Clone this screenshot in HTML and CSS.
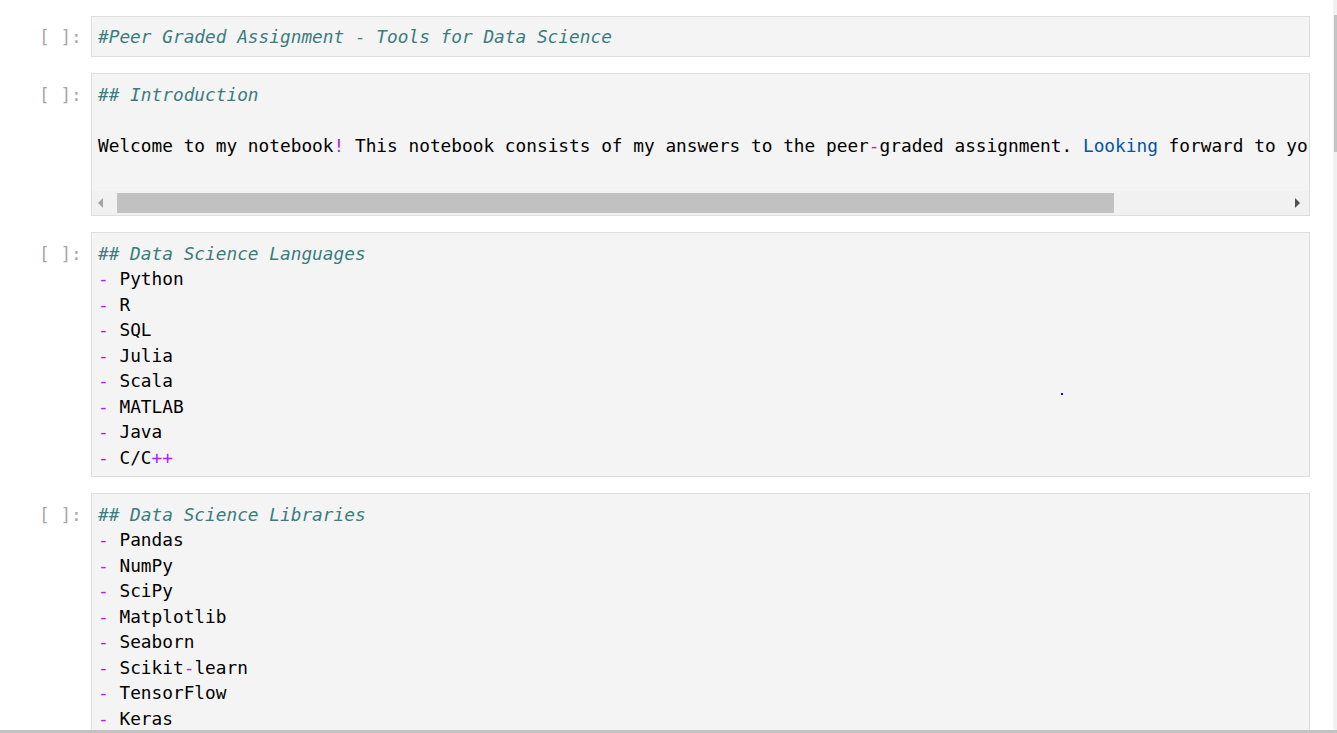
FILE: index.html
```html
<!DOCTYPE html>
<html lang="en">
<head>
<meta charset="utf-8">
<title>Notebook</title>
<link rel="stylesheet" href="styles.css">
</head>
<body>
<div class="page">
  <main class="notebook">
    <div class="cell first">
      <div class="prompt">[ ]:</div>
      <div class="input">
        <div class="code"><div class="line"><span class="hd">#Peer Graded Assignment - Tools for Data Science</span></div></div>
      </div>
    </div>

    <div class="cell">
      <div class="prompt">[ ]:</div>
      <div class="input">
        <div class="code clip"><div class="line"><span class="hd">## Introduction</span></div><div class="line"> </div><div class="line">Welcome to my notebook<span class="pu">!</span> This notebook consists of my answers to the peer<span class="pu">-</span>graded assignment. <span class="bl">Looking</span> forward to your feedback<span class="pu">!</span></div><div class="line"> </div></div>
        <div class="hscroll">
          <div class="arrow left"></div>
          <div class="track"><div class="thumb"></div></div>
          <div class="arrow right"></div>
        </div>
      </div>
    </div>

    <div class="cell">
      <div class="prompt">[ ]:</div>
      <div class="input marked">
        <div class="code"><div class="line"><span class="hd">## Data Science Languages</span></div><div class="line"><span class="pu">-</span> Python</div><div class="line"><span class="pu">-</span> R</div><div class="line"><span class="pu">-</span> SQL</div><div class="line"><span class="pu">-</span> Julia</div><div class="line"><span class="pu">-</span> Scala</div><div class="line"><span class="pu">-</span> MATLAB</div><div class="line"><span class="pu">-</span> Java</div><div class="line"><span class="pu">-</span> C/C<span class="pu">++</span></div></div>
        <span class="dot"></span>
      </div>
    </div>

    <div class="cell">
      <div class="prompt">[ ]:</div>
      <div class="input">
        <div class="code"><div class="line"><span class="hd">## Data Science Libraries</span></div><div class="line"><span class="pu">-</span> Pandas</div><div class="line"><span class="pu">-</span> NumPy</div><div class="line"><span class="pu">-</span> SciPy</div><div class="line"><span class="pu">-</span> Matplotlib</div><div class="line"><span class="pu">-</span> Seaborn</div><div class="line"><span class="pu">-</span> Scikit<span class="pu">-</span>learn</div><div class="line"><span class="pu">-</span> TensorFlow</div><div class="line"><span class="pu">-</span> Keras</div><div class="line"><span class="pu">-</span> PyTorch</div></div>
      </div>
    </div>
  </main>
  <div class="vscroll"><div class="vthumb"></div></div>
</div>
<div class="bottombar"></div>
</body>
</html>
```

FILE: styles.css
```css
* { box-sizing: border-box; }

html, body {
  margin: 0;
  padding: 0;
  height: 733px;
  overflow: hidden;
  background: #ffffff;
}

body {
  display: flex;
  flex-direction: column;
  font-family: "DejaVu Sans Mono", "Liberation Mono", monospace;
  font-size: 17.8px;
  color: #000000;
}

.page {
  flex: 1;
  min-height: 0;
  display: flex;
  overflow: hidden;
}

.notebook {
  flex: 1;
  min-width: 0;
  padding: 16px 23px 0 0;
  display: flex;
  flex-direction: column;
  gap: 16px;
}

.cell {
  display: flex;
  flex-shrink: 0;
}

.prompt {
  width: 91px;
  flex-shrink: 0;
  padding: 8.5px 0 0 39px;
  line-height: 25.5px;
  color: #a8a8a8;
  white-space: pre;
}

.input {
  position: relative;
  flex: 1;
  min-width: 0;
  background: #f4f4f4;
  border: 1px solid #dedede;
  display: flex;
  flex-direction: column;
}

.code {
  padding: 7.5px 0 6px 6px;
  line-height: 25.5px;
  white-space: pre;
  overflow: hidden;
}

.cell.first .code {
  padding: 7px 0 6.5px 6px;
}

.cell.first .prompt {
  padding-top: 8px;
}

.code.clip {
  padding-bottom: 7.5px;
}

.line {
  height: 25.5px;
}

.hd {
  color: #3a7d7c;
  font-style: italic;
}

.pu { color: #aa22ff; }
.bl { color: #0055aa; }

.hscroll {
  height: 24px;
  display: flex;
  align-items: center;
  background: #f1f1f1;
}

.track {
  flex: 1;
  height: 20px;
  display: flex;
}

.thumb {
  width: 997px;
  height: 20px;
  background: #c1c1c1;
}

.arrow {
  width: 25px;
  height: 24px;
  display: flex;
  align-items: center;
  justify-content: center;
}

.arrow::before {
  content: "";
  width: 0;
  height: 0;
  border-top: 5px solid transparent;
  border-bottom: 5px solid transparent;
}

.arrow.left::before {
  border-right: 5px solid #a3a3a3;
  margin-right: 8px;
}

.arrow.right::before {
  border-left: 5px solid #505050;
  margin-left: 2px;
}

.dot {
  position: absolute;
  left: 969px;
  top: 160px;
  width: 2px;
  height: 2px;
  background: #0000ff;
}

.vscroll {
  width: 4px;
  flex-shrink: 0;
  background: #f1f1f1;
  padding-top: 15px;
}

.vthumb {
  width: 3px;
  margin-left: 1px;
  height: 137px;
  background: #c4c4c4;
}

.bottombar {
  height: 3px;
  flex-shrink: 0;
  background: #c2c2c2;
}
```
